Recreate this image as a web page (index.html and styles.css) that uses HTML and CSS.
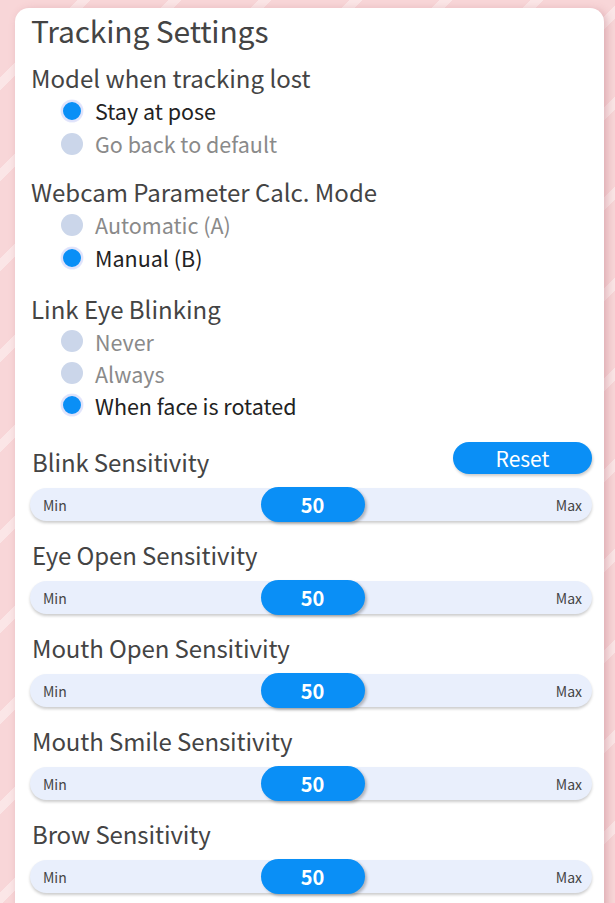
FILE: index.html
```html
<!DOCTYPE html>
<html>
<head>
<meta charset="utf-8">
<link rel="stylesheet" href="styles.css">
</head>
<body>
<div class="card">
  <h1 class="title">Tracking Settings</h1>

  <div class="group first">
    <div class="heading">Model when tracking lost</div>
    <div class="option on"><span class="radio"></span><span>Stay at pose</span></div>
    <div class="option"><span class="radio"></span><span>Go back to default</span></div>
  </div>

  <div class="group">
    <div class="heading">Webcam Parameter Calc. Mode</div>
    <div class="option"><span class="radio"></span><span>Automatic (A)</span></div>
    <div class="option on"><span class="radio"></span><span>Manual (B)</span></div>
  </div>

  <div class="group third">
    <div class="heading">Link Eye Blinking</div>
    <div class="option tight"><span class="radio"></span><span>Never</span></div>
    <div class="option tight"><span class="radio"></span><span>Always</span></div>
    <div class="option tight on"><span class="radio"></span><span>When face is rotated</span></div>
  </div>

  <div class="sliders">
    <div class="slider-block">
      <div class="slider-head">
        <span class="label">Blink Sensitivity</span>
        <button class="reset">Reset</button>
      </div>
      <div class="track"><span class="end">Min</span><span class="thumb">50</span><span class="end">Max</span></div>
    </div>
    <div class="slider-block">
      <div class="slider-head"><span class="label">Eye Open Sensitivity</span></div>
      <div class="track"><span class="end">Min</span><span class="thumb">50</span><span class="end">Max</span></div>
    </div>
    <div class="slider-block">
      <div class="slider-head"><span class="label">Mouth Open Sensitivity</span></div>
      <div class="track"><span class="end">Min</span><span class="thumb">50</span><span class="end">Max</span></div>
    </div>
    <div class="slider-block">
      <div class="slider-head"><span class="label">Mouth Smile Sensitivity</span></div>
      <div class="track"><span class="end">Min</span><span class="thumb">50</span><span class="end">Max</span></div>
    </div>
    <div class="slider-block">
      <div class="slider-head"><span class="label">Brow Sensitivity</span></div>
      <div class="track"><span class="end">Min</span><span class="thumb">50</span><span class="end">Max</span></div>
    </div>
  </div>
</div>
</body>
</html>
```

FILE: styles.css
```css
html, body {
  margin: 0;
  padding: 0;
  height: 100%;
  overflow: hidden;
}
body {
  font-family: "Noto Sans CJK JP", "Noto Sans", sans-serif;
  background-color: #f8d6d8;
  background-image: repeating-linear-gradient(135deg,
    #f8d6d8 0px, #f8d6d8 55px,
    #fbe6e7 55px, #fbe6e7 64px);
  padding: 8px 11px 0 15px;
  box-sizing: border-box;
}
.card {
  background: #fff;
  border-radius: 14px 14px 0 0;
  box-shadow: 3px 2px 8px rgba(190, 120, 130, 0.45);
  padding: 0 12px 40px 15px;
  min-height: 1000px;
  color: #444;
}
.title {
  margin: 0;
  font-weight: 400;
  font-size: 30px;
  line-height: 44px;
  padding-left: 1px;
  color: #444;
  letter-spacing: -0.15px;
}
.group.first { margin-top: 10px; }
.group { margin-top: 16px; }
.group.third { margin-top: 19px; }
.heading {
  font-size: 24px;
  line-height: 32px;
  padding-left: 1px;
  color: #444;
}
.option {
  display: flex;
  align-items: center;
  height: 33px;
  padding-left: 31px;
  gap: 12px;
  font-size: 21.5px;
  color: #8a8a8a;
}
.option.tight { height: 32px; }
.option.on { color: #222; }
.radio {
  width: 22px;
  height: 22px;
  border-radius: 50%;
  background: #cbd6ea;
  box-sizing: border-box;
  flex: none;
}
.option.on .radio {
  background: #0a8ff6;
  border: 2px solid #dfe3fb;
  box-shadow: 0 0 0 0.5px #e8eafc;
}
.sliders { margin-top: 21px; }
.slider-block { margin-bottom: 14px; }
.slider-head {
  display: flex;
  align-items: center;
  justify-content: space-between;
  height: 36px;
  margin-bottom: 10px;
}
.label {
  font-size: 24px;
  color: #444;
  padding-left: 2px;
  letter-spacing: -0.1px;
  position: relative;
  top: 1px;
}
.reset {
  width: 139px;
  height: 32px;
  border: none;
  border-radius: 16px;
  background: #0a8ff6;
  color: #fff;
  font-family: inherit;
  font-size: 21px;
  line-height: 32px;
  padding: 0;
  margin-top: -5px;
  box-shadow: 1px 2px 3px rgba(0, 0, 0, 0.2);
}
.track {
  height: 33px;
  border-radius: 17px;
  background: #e9effc;
  box-shadow: 0 2px 3px rgba(0, 0, 0, 0.2);
  display: flex;
  align-items: center;
  justify-content: space-between;
  padding: 0 10px 0 13px;
}
.end {
  font-size: 14px;
  color: #444;
  width: 40px;
}
.end:last-child { text-align: right; }
.thumb {
  width: 104px;
  height: 35px;
  border-radius: 18px;
  background: #0a8ff6;
  color: #fff;
  font-weight: 700;
  font-size: 20px;
  display: flex;
  align-items: center;
  justify-content: center;
  box-shadow: 2px 2px 3px rgba(0, 0, 0, 0.25);
}
```
